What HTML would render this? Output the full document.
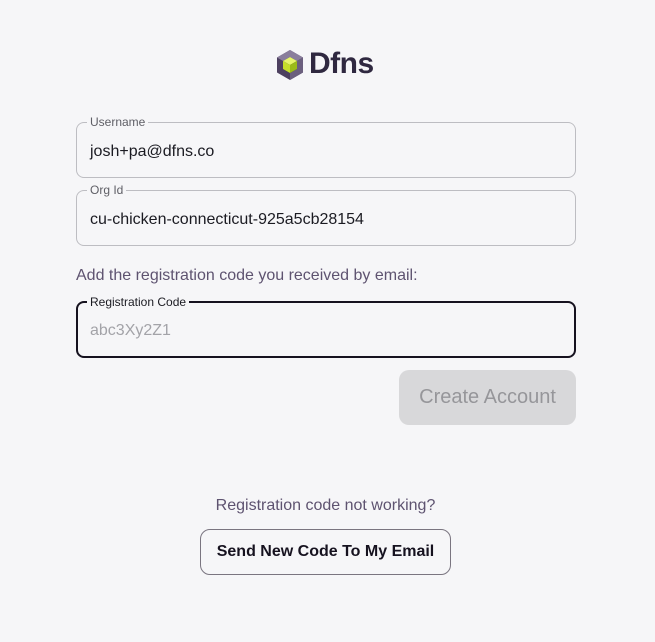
<!DOCTYPE html>
<html><head><meta charset="utf-8"><style>
*{box-sizing:border-box;margin:0;padding:0}
body{width:655px;height:642px;background:#f6f6f8;font-family:"Liberation Sans",sans-serif;position:relative;overflow:hidden}
.fs{position:absolute;left:76px;width:500px;height:56px;border:1px solid #bdbdc2;border-radius:8px;padding:0 13px}
.fs legend{font-size:12px;color:#5f5f66;padding:0 3px;margin-left:-3px;line-height:12px}
.fs .v{position:absolute;left:13px;font-size:16px;color:#1b1b22}
.abs{position:absolute}
</style></head><body>
<svg class="abs" style="left:275px;top:49px" width="30" height="32" viewBox="0 0 30 32">
<polygon points="15,1 28,8.5 28,23.5 15,31 2,23.5 2,8.5" fill="#4d4060"/>
<polygon points="15,1 28,8.5 15,16 2,8.5" fill="#8a7e9c"/>
<polygon points="15,16 28,8.5 28,23.5 15,31" fill="#6b5f7e"/>
<polygon points="15,8 22,12 22,20 15,24 8,20 8,12" fill="#2c2238"/>
<polygon points="15,8 22,12 15,16 8,12" fill="#e6f56a"/>
<polygon points="8,12 15,16 15,24 8,20" fill="#c5df2a"/>
<polygon points="15,16 22,12 22,20 15,24" fill="#9bbb18"/>
</svg>
<div class="abs" style="left:309px;top:47px;font-size:30px;font-weight:bold;color:#2f2840;letter-spacing:-0.5px">Dfns</div>
<fieldset class="fs" style="top:116px;height:62px"><legend>Username</legend><span class="v" style="top:15px">josh+pa@dfns.co</span></fieldset>
<fieldset class="fs" style="top:184px;height:62px"><legend>Org Id</legend><span class="v" style="top:15px">cu-chicken-connecticut-925a5cb28154</span></fieldset>
<div class="abs" style="left:76px;top:267px;font-size:16px;color:#5e5370">Add the registration code you received by email:</div>
<fieldset class="fs" style="top:296px;height:62px;border:2px solid #16121f"><legend style="color:#1b1b22;margin-left:-4px">Registration Code</legend><span class="v" style="top:14px;left:12px;color:#a3a3a8">abc3Xy2Z1</span></fieldset>
<div class="abs" style="left:399px;top:370px;width:177px;height:55px;background:#d8d8da;border-radius:10px;color:#96969a;font-size:20px;text-align:center;line-height:55px">Create Account</div>
<div class="abs" style="left:0;width:651px;top:497px;text-align:center;font-size:16px;color:#5e5370">Registration code not working?</div>
<div class="abs" style="left:200px;top:529px;width:251px;height:46px;border:1px solid #7a7580;border-radius:10px;text-align:center;line-height:44px;font-size:16px;font-weight:bold;color:#16121f">Send New Code To My Email</div>
</body></html>
